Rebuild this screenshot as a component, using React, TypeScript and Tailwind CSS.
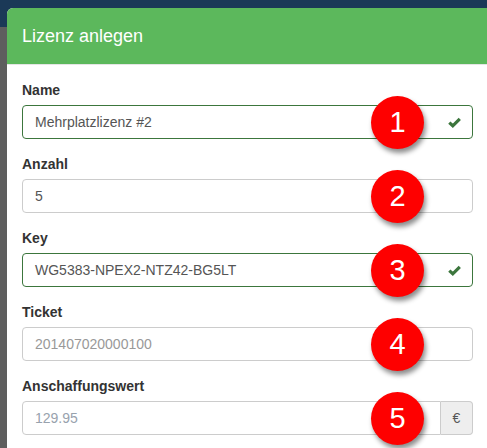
type Field = {
  label: string;
  value: string;
  num: number;
  success?: boolean;
  muted?: boolean;
  addon?: string;
};

const fields: Field[] = [
  { label: "Name", value: "Mehrplatzlizenz #2", num: 1, success: true },
  { label: "Anzahl", value: "5", num: 2 },
  { label: "Key", value: "WG5383-NPEX2-NTZ42-BG5LT", num: 3, success: true },
  { label: "Ticket", value: "201407020000100", num: 4, muted: true },
  { label: "Anschaffungswert", value: "129.95", num: 5, muted: true, addon: "€" },
];

function Check() {
  return (
    <svg width="13" height="11" viewBox="0 0 13 11" className="absolute right-[12px] top-[12px]">
      <path d="M1.3 5.6 L4.8 8.8 L11.8 1.8" fill="none" stroke="#3c763d" strokeWidth="3.2" strokeLinejoin="miter" />
    </svg>
  );
}

function Badge({ n }: { n: number }) {
  return (
    <div className="absolute left-[349px] top-[-9px] flex h-[53px] w-[53px] items-center justify-center rounded-full bg-[#fe0000] text-[29px] leading-none text-white shadow-[2px_4px_5px_rgba(0,0,0,0.45)]">
      {n}
    </div>
  );
}

export default function App() {
  return (
    <div className="h-[448px] w-[487px] overflow-hidden bg-[linear-gradient(#1b3957_0_27px,#5e5e5e_27px)] pt-[8px] pl-[7px] font-['Liberation_Sans',Arial,sans-serif]">
      <div className="h-[460px] w-[481px] rounded-tl-[6px] bg-white overflow-hidden">
        {/* header */}
        <div className="border-b border-[#e5e5e5] bg-[#5cb85c] px-[15px] py-[15px]">
          <h4 className="text-[18px] leading-[26px] text-white">Lizenz anlegen</h4>
        </div>

        {/* body */}
        <div className="p-[15px]">
          {fields.map((f) => (
            <div key={f.label} className="mb-[15px]">
              <label className="mb-[5px] block text-[14px] font-bold leading-[20px] text-[#333]">{f.label}</label>
              <div className="relative flex h-[34px] w-[451px]">
                <div
                  className={
                    "flex h-[34px] flex-1 items-center border px-[12px] text-[14px] " +
                    (f.success ? "border-[#3c763d] " : "border-[#ccc] ") +
                    (f.addon ? "rounded-l-[4px] " : "rounded-[4px] ") +
                    (f.muted ? (f.addon ? "text-[#98a2ad]" : "text-[#999]") : "text-[#555]")
                  }
                >
                  {f.value}
                </div>
                {f.addon && (
                  <div className="flex h-[34px] w-[32px] items-center justify-center rounded-r-[4px] border border-l-0 border-[#ccc] bg-[#eee] text-[14px] text-[#555]">
                    {f.addon}
                  </div>
                )}
                {f.success && <Check />}
                <Badge n={f.num} />
              </div>
            </div>
          ))}
        </div>
      </div>
    </div>
  );
}
